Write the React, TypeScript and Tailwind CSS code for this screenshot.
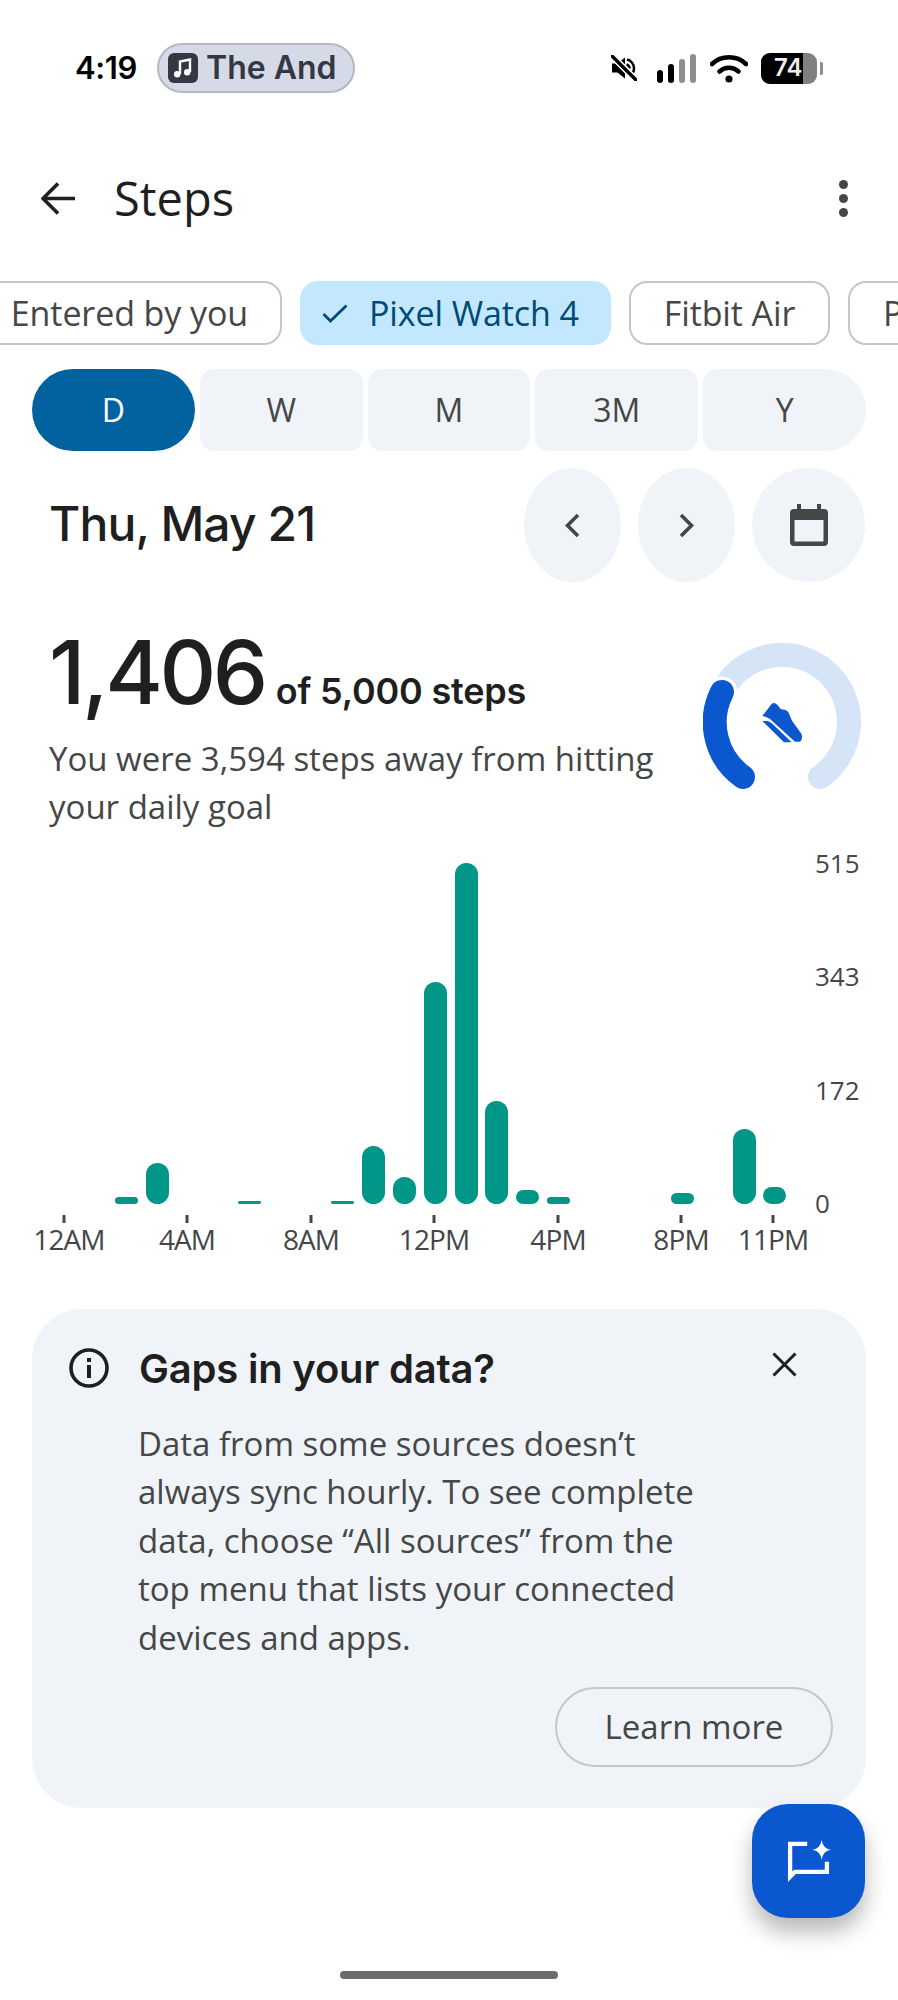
const sans = "font-['Open_Sans','Noto_Sans',sans-serif]";
const heading = "font-['Inter','Open_Sans',sans-serif]";

const bars = [
  { hour: 2, height: 7 },
  { hour: 3, height: 41 },
  { hour: 6, height: 3 },
  { hour: 9, height: 3 },
  { hour: 10, height: 58 },
  { hour: 11, height: 27 },
  { hour: 12, height: 222 },
  { hour: 13, height: 341 },
  { hour: 14, height: 103 },
  { hour: 15, height: 14 },
  { hour: 16, height: 7 },
  { hour: 20, height: 11 },
  { hour: 22, height: 75 },
  { hour: 23, height: 17 },
];

const xLabels = [
  { hour: 0, label: "12AM", center: 69 },
  { hour: 4, label: "4AM", center: 187 },
  { hour: 8, label: "8AM", center: 311 },
  { hour: 12, label: "12PM", center: 434 },
  { hour: 16, label: "4PM", center: 558 },
  { hour: 20, label: "8PM", center: 681 },
  { hour: 23, label: "11PM", center: 773 },
];

const periods = [
  { label: "D", className: "rounded-l-[41px] rounded-r-[41px] bg-[#01629f] text-white" },
  { label: "W", className: "rounded-[14px] bg-[#f0f4f9] text-[#444746]" },
  { label: "M", className: "rounded-[14px] bg-[#f0f4f9] text-[#444746]" },
  { label: "3M", className: "rounded-[14px] bg-[#f0f4f9] text-[#444746]" },
  { label: "Y", className: "rounded-l-[14px] rounded-r-[41px] bg-[#f0f4f9] text-[#444746]" },
];

function StatusBar() {
  return (
    <div className="flex h-[92px] items-start pt-[43px] pl-[75px] font-['Inter',sans-serif]">
      <span className="mr-[19px] flex h-[50px] w-[63px] items-center text-[31px] font-semibold tracking-[-0.4px] text-black">
        4:19
      </span>
      <div className="flex h-[50px] w-[198px] items-center rounded-full border-2 border-[#b4b7c4] bg-[#d6d9e6] pl-[9px]">
        <span className="flex h-[30px] w-[30px] items-center justify-center rounded-[6px] bg-[#333842]">
          <svg width="20" height="22" viewBox="0 0 20 22" fill="none">
            <path d="M7 17V4.5L17 2.5V15" stroke="#fff" strokeWidth="2.4" />
            <circle cx="4.2" cy="17.2" r="3.2" fill="#fff" />
            <circle cx="14.2" cy="15.2" r="3.2" fill="#fff" />
          </svg>
        </span>
        <span className="ml-[8px] text-[32px] leading-none font-semibold text-[#333842]">The And</span>
      </div>
      <div className="ml-auto mr-[75px] flex h-[50px] items-center">
        <svg width="26" height="26" viewBox="0 0 26 26" fill="none" className="mr-[20px]">
          <path d="M1 8.5H6.5L14 2.5V23.5L6.5 17.5H1Z" fill="#000" />
          <path d="M16 4.5C20 5.5 23 9 23 13.5C23 15 22.7 16.3 22 17.5" stroke="#000" strokeWidth="2.6" />
          <path d="M15.5 9.5C17.5 10.2 18.6 11.8 18.6 13.6" stroke="#000" strokeWidth="2.4" />
          <path d="M1 1L25 25" stroke="#fff" strokeWidth="6.5" />
          <path d="M1 1L25 25" stroke="#000" strokeWidth="3.4" strokeLinecap="round" />
        </svg>
        <div className="mr-[14px] flex h-[30px] items-end gap-[5px]">
          <span className="h-[13px] w-[6px] rounded-[3px] bg-black" />
          <span className="h-[19px] w-[6px] rounded-[3px] bg-black" />
          <span className="h-[24px] w-[6px] rounded-[3px] bg-[#8e8e8e]" />
          <span className="h-[29px] w-[6px] rounded-[3px] bg-[#8e8e8e]" />
        </div>
        <svg width="38" height="30" viewBox="0 0 38 30" fill="none" className="mr-[13px]">
          <path d="M2 11C11 2 27 2 36 11" stroke="#000" strokeWidth="4.6" strokeLinecap="round" />
          <path d="M9.5 18.5C15 13.5 23 13.5 28.5 18.5" stroke="#000" strokeWidth="4.6" strokeLinecap="round" />
          <circle cx="19" cy="26" r="3.6" fill="#000" />
        </svg>
        <div className="flex items-center">
          <div className="relative flex h-[31px] w-[56px] items-center overflow-hidden rounded-[9px] bg-[#808080]">
            <span className="absolute inset-y-0 left-0 w-[42px] bg-black" />
            <span className="relative ml-[13px] text-[24px] leading-none font-semibold text-[#eeeeee]">74</span>
          </div>
          <span className="ml-[3px] h-[13px] w-[3px] rounded-r-[2px] bg-[#8e8e8e]" />
        </div>
      </div>
    </div>
  );
}

function Chips() {
  return (
    <div className="mt-[32px] -ml-[20px] flex h-[64px] gap-[18px] text-[34px] tracking-[-0.1px] text-[#444746]">
      <div className="flex w-[302px] shrink-0 items-center justify-end rounded-[18px] border-[2.5px] border-[#c4c7c5] bg-white pr-[32px]">
        Entered by you
      </div>
      <div className="flex w-[311px] shrink-0 items-center rounded-[18px] bg-[#c2e7ff] pl-[22px] text-[#004a77]">
        <svg width="26" height="19" viewBox="0 0 26 19" fill="none" className="mr-[21px]">
          <path d="M1.5 10L8.5 17L24.5 1.5" stroke="#004a77" strokeWidth="2.8" />
        </svg>
        Pixel Watch 4
      </div>
      <div className="flex w-[201px] shrink-0 items-center justify-center rounded-[18px] border-[2.5px] border-[#c4c7c5] bg-white">
        Fitbit Air
      </div>
      <div className="flex w-[120px] shrink-0 items-center rounded-[18px] border-[2.5px] border-[#c4c7c5] bg-white pl-[33px]">
        P
      </div>
    </div>
  );
}

function PeriodTabs() {
  return (
    <div className="mt-[24px] flex h-[82px] gap-[5px] px-[32px] text-[32px]">
      {periods.map((p) => (
        <div key={p.label} className={`flex flex-1 items-center justify-center ${p.className}`}>
          {p.label}
        </div>
      ))}
    </div>
  );
}

function DateRow() {
  return (
    <div className="mt-[17px] flex h-[114px] items-center pr-[33px] pl-[49px]">
      <span className={`mb-[2px] text-[48px] font-medium tracking-[-0.9px] text-[#1f1f1f] ${heading}`}>Thu, May 21</span>
      <div className="ml-auto flex gap-[17px]">
        <button className="flex h-[114px] w-[97px] items-center justify-center rounded-[50%] bg-[#f0f4f9]">
          <svg width="17" height="25" viewBox="0 0 17 25" fill="none">
            <path d="M14 2L3.5 12.5L14 23" stroke="#444746" strokeWidth="3.6" />
          </svg>
        </button>
        <button className="flex h-[114px] w-[97px] items-center justify-center rounded-[50%] bg-[#f0f4f9]">
          <svg width="17" height="25" viewBox="0 0 17 25" fill="none">
            <path d="M3 2L13.5 12.5L3 23" stroke="#444746" strokeWidth="3.6" />
          </svg>
        </button>
        <button className="flex h-[114px] w-[113px] items-center justify-center rounded-[50%] bg-[#f0f4f9]">
          <svg width="38" height="42" viewBox="0 0 38 42" fill="none">
            <path d="M7 0H11V5H27V0H31V5H34Q38 5 38 9V38Q38 42 34 42H4Q0 42 0 38V9Q0 5 4 5H7Z" fill="#444746" />
            <rect x="4.5" y="16" width="29" height="21.5" fill="#f0f4f9" />
          </svg>
        </button>
      </div>
    </div>
  );
}

function GoalGauge() {
  return (
    <svg width="158" height="150" viewBox="0 0 158 150" fill="none" className="mt-[33px] shrink-0">
      <path d="M19 49A67 67 0 1 1 117 134" stroke="#d6e4f8" strokeWidth="24" strokeLinecap="round" />
      <path d="M19 49A67 67 0 0 0 40 134" stroke="#fff" strokeWidth="31" strokeLinecap="round" />
      <path d="M19 49A67 67 0 0 0 40 134" stroke="#0b57d0" strokeWidth="24" strokeLinecap="round" />
      <g transform="translate(-23 -23) scale(.3333)" fill="#0b57d0">
        <path d="M247 288L275 252Q282 245 292 254L303 268Q318 268 326 278L336 302L362 338Q372 352 360 365L345 365L270 297Q258 290 247 288Z" />
        <path d="M247 303L262 303Q270 305 278 312L335 367L312 367Z" />
      </g>
    </svg>
  );
}

function Summary() {
  return (
    <div className="mt-[28px] flex justify-between pr-[37px] pl-[49px]">
      <div>
        <div className={`flex h-[125px] items-baseline pt-[3px] ${heading}`}>
          <span className="text-[88px] leading-[118px] font-medium tracking-[-3.5px] text-[#1f1f1f]">1,406</span>
          <span className="ml-[11px] text-[36px] font-semibold tracking-[-0.2px] text-[#1f1f1f]">of 5,000 steps</span>
        </div>
        <p className="w-[620px] text-[33px] leading-[48px] text-[#444746]">
          You were 3,594 steps away from hitting your daily goal
        </p>
      </div>
      <GoalGauge />
    </div>
  );
}

function StepsChart() {
  return (
    <div className="relative mt-[16px] h-[386px]">
      <div className="absolute top-[16px] left-[49px] grid h-[341px] grid-cols-[repeat(24,30.9px)] items-end">
        {bars.map((b) => (
          <div
            key={b.hour}
            className="mx-auto w-[23px] rounded-full bg-[#009688]"
            style={{ gridColumn: b.hour + 1, gridRow: 1, height: b.height }}
          />
        ))}
      </div>
      {xLabels.map((l) => (
        <div key={l.label} className="absolute top-[368px] -translate-x-1/2 text-center" style={{ left: l.center - 5 * (l.hour === 0 ? 1 : 0) }}>
          <div className="mx-auto h-[8px] w-[3px] bg-[#444746]" />
        </div>
      ))}
      {xLabels.map((l) => (
        <span
          key={l.label}
          className="absolute top-[375px] -translate-x-1/2 text-[28px] leading-[34px] tracking-[-0.9px] text-[#444746]"
          style={{ left: l.center }}
        >
          {l.label}
        </span>
      ))}
      <div className="absolute -top-[1px] left-[815px] flex h-[374px] flex-col justify-between text-[26px] leading-[34px] text-[#444746]">
        <span>515</span>
        <span>343</span>
        <span>172</span>
        <span>0</span>
      </div>
    </div>
  );
}

function GapsCard() {
  return (
    <div className="mx-[32px] mt-[76px] h-[499px] rounded-[50px] bg-[#f0f4f9] pt-[34px] pr-[33px] pl-[37px]">
      <div className="flex items-center">
        <svg width="40" height="40" viewBox="0 0 40 40" fill="none" className="shrink-0">
          <circle cx="20" cy="20" r="18" stroke="#1f1f1f" strokeWidth="3.6" />
          <rect x="18" y="17" width="4" height="13" fill="#1f1f1f" />
          <rect x="18" y="10" width="4" height="4" fill="#1f1f1f" />
        </svg>
        <h2 className={`mt-[2px] ml-[30px] text-[40px] leading-[48px] font-semibold tracking-[-0.2px] text-[#1f1f1f] ${heading}`}>
          Gaps in your data?
        </h2>
        <svg width="25" height="25" viewBox="0 0 25 25" fill="none" className="mb-[8px] ml-auto mr-[36px]">
          <path d="M1.5 1.5L23.5 23.5M23.5 1.5L1.5 23.5" stroke="#1f1f1f" strokeWidth="3" />
        </svg>
      </div>
      <p className="mt-[27px] ml-[69px] w-[570px] text-[33px] leading-[48.4px] text-[#444746]">
        Data from some sources doesn’t always sync hourly. To see complete data, choose “All sources” from the top menu that lists your connected devices and apps.
      </p>
      <div className="mt-[25px] flex justify-end">
        <button className="flex h-[80px] w-[278px] items-center justify-center rounded-full border-[2.5px] border-[#c4c7c5] text-[33px] font-medium text-[#444746]">
          Learn more
        </button>
      </div>
    </div>
  );
}

export default function App() {
  return (
    <div className={`relative h-[2000px] w-[898px] overflow-hidden bg-white ${sans}`}>
      <StatusBar />
      <div className="flex h-[157px] items-center pt-[56px] pr-[50px] pl-[41px]">
        <svg width="34" height="33" viewBox="0 0 34 33" fill="none">
          <path d="M17 1.5L2 16.5L17 31.5M2 16.5H34" stroke="#1f1f1f" strokeWidth="3.6" />
        </svg>
        <h1 className="ml-[39px] text-[47px] text-[#1f1f1f]">Steps</h1>
        <div className="ml-auto flex flex-col gap-[5px]">
          <span className="h-[9px] w-[9px] rounded-full bg-[#444746]" />
          <span className="h-[9px] w-[9px] rounded-full bg-[#444746]" />
          <span className="h-[9px] w-[9px] rounded-full bg-[#444746]" />
        </div>
      </div>
      <Chips />
      <PeriodTabs />
      <DateRow />
      <Summary />
      <StepsChart />
      <GapsCard />
      <button className="absolute top-[1804px] left-[752px] flex h-[114px] w-[113px] items-center justify-center rounded-[36px] bg-[#0b57d0] shadow-[0_14px_22px_rgba(0,0,0,0.28)]">
        <svg width="48" height="46" viewBox="165 140 145 140" fill="none">
          <path d="M232 158H180V258L195 243H292V212" stroke="#fff" strokeWidth="13" />
          <path d="M276 146Q280 172 304 176Q280 180 276 206Q272 180 248 176Q272 172 276 146Z" fill="#fff" />
        </svg>
      </button>
      <div className="absolute top-[1971px] left-[340px] h-[8px] w-[218px] rounded-full bg-[#6b6b6b]" />
    </div>
  );
}
